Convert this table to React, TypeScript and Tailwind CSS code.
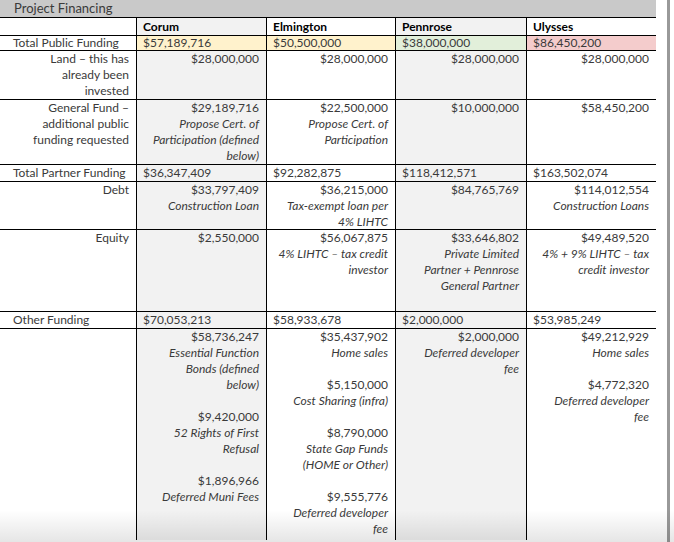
import React from "react";

type Line = { t: string; i?: boolean } | null;

const v = (t: string): Line => ({ t });
const it = (t: string): Line => ({ t, i: true });

type Cell = { lines: Line[]; align?: "l" | "r"; bg?: string; bold?: boolean };

type Row = { h: string; cells: Cell[]; last?: boolean };

const G = "bg-[#f2f2f2]";

const rows: Row[] = [
  {
    h: "h-[18px]",
    cells: [
      { lines: [] },
      { lines: [v("Corum")], bold: true, bg: G },
      { lines: [v("Elmington")], bold: true },
      { lines: [v("Pennrose")], bold: true, bg: G },
      { lines: [v("Ulysses")], bold: true },
    ],
  },
  {
    h: "h-[15px]",
    cells: [
      { lines: [v("Total Public Funding")] },
      { lines: [v("$57,189,716")], bg: "bg-[#fff2cc]" },
      { lines: [v("$50,500,000")], bg: "bg-[#fff2cc]" },
      { lines: [v("$38,000,000")], bg: "bg-[#e2efda]" },
      { lines: [v("$86,450,200")], bg: "bg-[#f4cccc]" },
    ],
  },
  {
    h: "h-[49px]",
    cells: [
      { lines: [v("Land – this has"), v("already been"), v("invested")], align: "r" },
      { lines: [v("$28,000,000")], align: "r", bg: G },
      { lines: [v("$28,000,000")], align: "r" },
      { lines: [v("$28,000,000")], align: "r", bg: G },
      { lines: [v("$28,000,000")], align: "r" },
    ],
  },
  {
    h: "h-[65px]",
    cells: [
      { lines: [v("General Fund –"), v("additional public"), v("funding requested")], align: "r" },
      {
        lines: [v("$29,189,716"), it("Propose Cert. of"), it("Participation (defined"), it("below)")],
        align: "r",
        bg: G,
      },
      { lines: [v("$22,500,000"), it("Propose Cert. of"), it("Participation")], align: "r" },
      { lines: [v("$10,000,000")], align: "r", bg: G },
      { lines: [v("$58,450,200")], align: "r" },
    ],
  },
  {
    h: "h-[17px]",
    cells: [
      { lines: [v("Total Partner Funding")] },
      { lines: [v("$36,347,409")], bg: G },
      { lines: [v("$92,282,875")] },
      { lines: [v("$118,412,571")], bg: G },
      { lines: [v("$163,502,074")] },
    ],
  },
  {
    h: "h-[48px]",
    cells: [
      { lines: [v("Debt")], align: "r" },
      { lines: [v("$33,797,409"), it("Construction Loan")], align: "r", bg: G },
      { lines: [v("$36,215,000"), it("Tax-exempt loan per"), it("4% LIHTC")], align: "r" },
      { lines: [v("$84,765,769")], align: "r", bg: G },
      { lines: [v("$114,012,554"), it("Construction Loans")], align: "r" },
    ],
  },
  {
    h: "h-[82px]",
    cells: [
      { lines: [v("Equity")], align: "r" },
      { lines: [v("$2,550,000")], align: "r", bg: G },
      { lines: [v("$56,067,875"), it("4% LIHTC – tax credit"), it("investor")], align: "r" },
      {
        lines: [v("$33,646,802"), it("Private Limited"), it("Partner + Pennrose"), it("General Partner")],
        align: "r",
        bg: G,
      },
      { lines: [v("$49,489,520"), it("4% + 9% LIHTC – tax"), it("credit investor")], align: "r" },
    ],
  },
  {
    h: "h-[17px]",
    cells: [
      { lines: [v("Other Funding")] },
      { lines: [v("$70,053,213")], bg: G },
      { lines: [v("$58,933,678")] },
      { lines: [v("$2,000,000")], bg: G },
      { lines: [v("$53,985,249")] },
    ],
  },
  {
    h: "h-[211px]",
    last: true,
    cells: [
      { lines: [] },
      {
        lines: [
          v("$58,736,247"),
          it("Essential Function"),
          it("Bonds (defined"),
          it("below)"),
          null,
          v("$9,420,000"),
          it("52 Rights of First"),
          it("Refusal"),
          null,
          v("$1,896,966"),
          it("Deferred Muni Fees"),
        ],
        align: "r",
        bg: G,
      },
      {
        lines: [
          v("$35,437,902"),
          it("Home sales"),
          null,
          v("$5,150,000"),
          it("Cost Sharing (infra)"),
          null,
          v("$8,790,000"),
          it("State Gap Funds"),
          it("(HOME or Other)"),
          null,
          v("$9,555,776"),
          it("Deferred developer"),
          it("fee"),
        ],
        align: "r",
      },
      { lines: [v("$2,000,000"), it("Deferred developer"), it("fee")], align: "r", bg: G },
      {
        lines: [v("$49,212,929"), it("Home sales"), null, v("$4,772,320"), it("Deferred developer"), it("fee")],
        align: "r",
      },
    ],
  },
];

function CellView({ cell, col, row }: { cell: Cell; col: number; row: Row }) {
  const base = [
    row.h,
    "overflow-hidden",
    row.last ? "" : "border-b border-black",
    col > 0 ? "border-l border-black" : "",
    cell.bg ?? "bg-white",
    cell.align === "r" ? "text-right pr-[7px]" : col === 0 ? "text-left pl-[13px]" : "text-left pl-[6px]",
    row.h === "h-[15px]" ? "leading-[14px]" : row.h === "h-[18px]" ? "leading-[17px]" : "leading-[16px]",
  ].join(" ");
  return (
    <div className={base}>
      {cell.lines.map((l, i) =>
        l === null ? (
          <div key={i} className="h-[16px]" />
        ) : (
          <div
            key={i}
            className={
              "whitespace-nowrap " +
              (cell.bold ? "font-bold text-black" : "font-normal text-[#3a3a3a]") +
              (l.i ? " italic" : "")
            }
          >
            {l.t}
          </div>
        )
      )}
    </div>
  );
}

export default function App() {
  return (
    <div className="relative flex w-[674px] h-[542px] overflow-hidden bg-white font-['Lato','Liberation_Sans',sans-serif] text-[12px]">
      <div className="w-[656px] flex flex-col">
        <div className="h-[18px] bg-[#c9c9c9] border-b border-black pl-[14px] text-[13px] leading-[17px] font-normal text-[#3a3a3a]">
          Project Financing
        </div>
        <div className="grid grid-cols-[136px_130px_129px_131px_130px]">
          {rows.map((row, ri) =>
            row.cells.map((cell, ci) => <CellView key={ri + "-" + ci} cell={cell} col={ci} row={row} />)
          )}
        </div>
      </div>
      <div className="ml-[11px] w-[3px] h-full bg-[#999999]" />
      <div className="pointer-events-none absolute inset-x-0 bottom-0 h-[32px] bg-linear-to-b from-transparent to-black/10" />
    </div>
  );
}
